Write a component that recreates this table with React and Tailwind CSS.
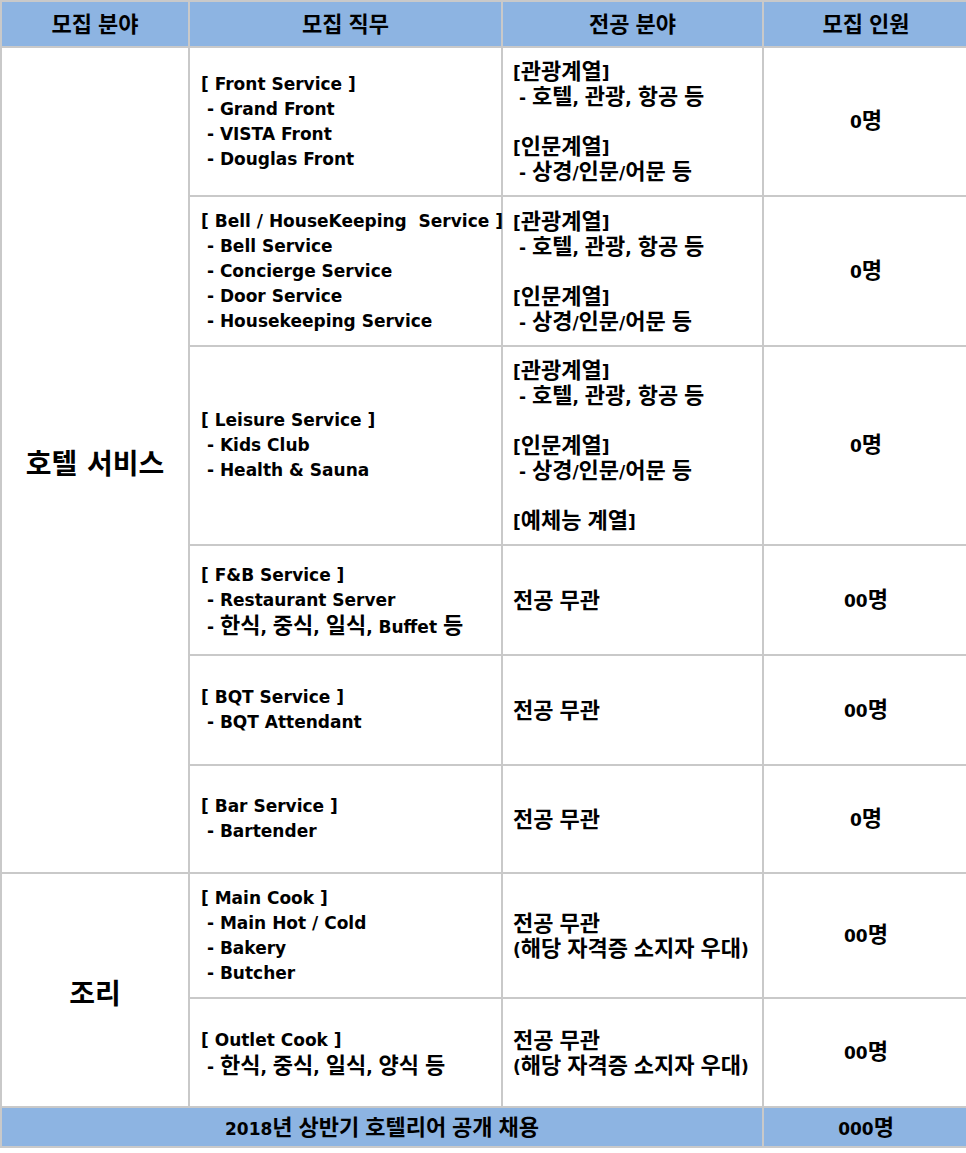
import React from "react";

const rows = [
  {
    job: ["[ Front Service ]", " - Grand Front", " - VISTA Front", " - Douglas Front"],
    major: ["[관광계열]", " - 호텔, 관광, 항공 등", "", "[인문계열]", " - 상경/인문/어문 등"],
    count: "0명",
  },
  {
    job: [
      "[ Bell / HouseKeeping  Service ]",
      " - Bell Service",
      " - Concierge Service",
      " - Door Service",
      " - Housekeeping Service",
    ],
    major: ["[관광계열]", " - 호텔, 관광, 항공 등", "", "[인문계열]", " - 상경/인문/어문 등"],
    count: "0명",
  },
  {
    job: ["[ Leisure Service ]", " - Kids Club", " - Health & Sauna"],
    major: [
      "[관광계열]",
      " - 호텔, 관광, 항공 등",
      "",
      "[인문계열]",
      " - 상경/인문/어문 등",
      "",
      "[예체능 계열]",
    ],
    count: "0명",
  },
  {
    job: ["[ F&B Service ]", " - Restaurant Server", " - 한식, 중식, 일식, Buffet 등"],
    major: ["전공 무관"],
    count: "00명",
  },
  {
    job: ["[ BQT Service ]", " - BQT Attendant"],
    major: ["전공 무관"],
    count: "00명",
  },
  {
    job: ["[ Bar Service ]", " - Bartender"],
    major: ["전공 무관"],
    count: "0명",
  },
  {
    job: ["[ Main Cook ]", " - Main Hot / Cold", " - Bakery", " - Butcher"],
    major: ["전공 무관", "(해당 자격증 소지자 우대)"],
    count: "00명",
  },
  {
    job: ["[ Outlet Cook ]", " - 한식, 중식, 일식, 양식 등"],
    major: ["전공 무관", "(해당 자격증 소지자 우대)"],
    count: "00명",
  },
];

// hangul runs get a bigger size so they line up with the latin text
function Txt({ children }) {
  const parts = String(children).split(/([\uAC00-\uD7A3]+)/);
  return (
    <span className="whitespace-pre">
      {parts.map((p, i) =>
        /[\uAC00-\uD7A3]/.test(p) ? (
          <span key={i} className="text-[22px]">
            {p}
          </span>
        ) : (
          p
        )
      )}
    </span>
  );
}

function Lines({ lines }) {
  return (
    <div className="flex flex-col">
      {lines.map((line, i) => (
        <div key={i} className="h-[25px] leading-[25px]">
          <Txt>{line}</Txt>
        </div>
      ))}
    </div>
  );
}

function Row({ r }) {
  return (
    <>
      <div className="bg-white flex items-center pl-[11px]">
        <Lines lines={r.job} />
      </div>
      <div className="bg-white flex items-center pl-[10px]">
        <Lines lines={r.major} />
      </div>
      <div className="bg-white flex items-center justify-center pr-[16px] leading-[25px]">
        <Txt>{r.count}</Txt>
      </div>
    </>
  );
}

export default function App() {
  return (
    <div
      className="w-[966px] h-[1153px] overflow-hidden bg-white text-black text-[17px] font-bold"
      style={{ fontFamily: '"DejaVu Sans", "Noto Sans CJK KR", sans-serif' }}
    >
      <div className="grid grid-cols-[186px_311px_259px_220px] grid-rows-[44px_147px_148px_197px_108px_108px_106px_123px_107px_38px] gap-[2px] bg-[#c9c9c9] p-[2px] pr-0 w-[984px]">
        <div className="bg-[#8db4e2] flex items-center justify-center">
          <Txt>모집 분야</Txt>
        </div>
        <div className="bg-[#8db4e2] flex items-center justify-center">
          <Txt>모집 직무</Txt>
        </div>
        <div className="bg-[#8db4e2] flex items-center justify-center">
          <Txt>전공 분야</Txt>
        </div>
        <div className="bg-[#8db4e2] flex items-center justify-center pr-[16px]">
          <Txt>모집 인원</Txt>
        </div>

        <div className="bg-white row-span-6 flex items-center justify-center pt-[10px] text-[28px]">
          호텔 서비스
        </div>
        {rows.slice(0, 6).map((r, i) => (
          <Row key={i} r={r} />
        ))}

        <div className="bg-white row-span-2 flex items-center justify-center pt-[10px] text-[28px]">
          조리
        </div>
        {rows.slice(6).map((r, i) => (
          <Row key={i} r={r} />
        ))}

        <div className="bg-[#8db4e2] col-span-3 flex items-center justify-center">
          <Txt>2018년 상반기 호텔리어 공개 채용</Txt>
        </div>
        <div className="bg-[#8db4e2] flex items-center justify-center pr-[16px]">
          <Txt>000명</Txt>
        </div>
      </div>
    </div>
  );
}
